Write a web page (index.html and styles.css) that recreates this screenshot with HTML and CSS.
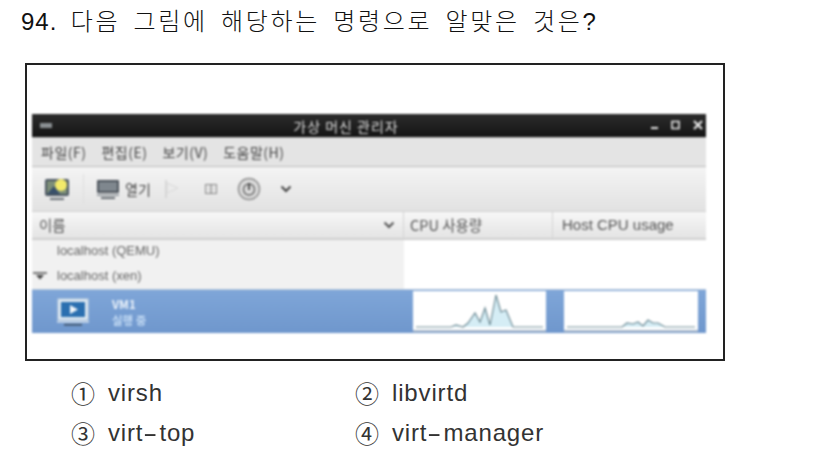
FILE: index.html
```html
<!DOCTYPE html>
<html>
<head>
    <title>94. 가상 머신 관리자</title>
    <link rel="stylesheet" href="styles.css">
</head>
<body>
    <h1 class="question"><span class="qnum">94.</span> 다음 그림에 해당하는 명령으로 알맞은 것은?</h1>

    <div class="figure">
        <div class="window">
            <div class="titlebar">
                <span class="app-mark"></span>
                <span class="title">가상 머신 관리자</span>
                <div class="win-buttons">
                    <svg width="60" height="14" viewBox="0 0 60 14">
                        <path d="M5 10h7" stroke="#e8e8e8" stroke-width="2"/>
                        <rect x="26" y="3.5" width="7" height="7" fill="none" stroke="#e8e8e8" stroke-width="1.6"/>
                        <path d="M48 3l8 8M56 3l-8 8" stroke="#e8e8e8" stroke-width="2.2"/>
                    </svg>
                </div>
            </div>

            <div class="menubar">
                <span>파일(F)</span>
                <span>편집(E)</span>
                <span>보기(V)</span>
                <span>도움말(H)</span>
            </div>

            <div class="toolbar">
                <svg class="tool-new" width="26" height="26" viewBox="0 0 26 26">
                    <rect x="1" y="3" width="24" height="17" rx="2" fill="#4a5560"/>
                    <rect x="3" y="5" width="20" height="13" fill="#7d8f78"/>
                    <circle cx="17" cy="9" r="6" fill="#f3ea6a"/>
                    <path d="M3 18l7-8 6 8z" fill="#39506a"/>
                    <path d="M6 22h14v2H6z" fill="#6c7278"/>
                </svg>
                <span class="tool-sep"></span>
                <svg class="tool-open" width="24" height="22" viewBox="0 0 24 22">
                    <rect x="1" y="2" width="22" height="13" rx="1" fill="#4d545c"/>
                    <rect x="3" y="4" width="18" height="9" fill="#7f878e"/>
                    <path d="M1 16h22v2H1z" fill="#9aa0a5"/>
                    <path d="M5 19h14v2H5z" fill="#666c72"/>
                </svg>
                <span class="tool-label">열기</span>
                <svg class="tool-play" width="16" height="20" viewBox="0 0 16 20">
                    <path d="M2 1v18" stroke="#cfcfcf" stroke-width="1.5"/>
                    <path d="M3 4l11 5-11 5z" fill="#ebebeb" stroke="#d8d8d8"/>
                </svg>
                <svg class="tool-pause" width="12" height="10" viewBox="0 0 12 10">
                    <rect x="0.5" y="0.5" width="11" height="9" fill="#e4e4e4" stroke="#8b8b8b"/>
                    <path d="M6 0v10" stroke="#777"/>
                </svg>
                <svg class="tool-power" width="24" height="24" viewBox="0 0 24 24">
                    <circle cx="12" cy="12" r="10.5" fill="#dcdcdc" stroke="#8f8f8f" stroke-width="1.5"/>
                    <circle cx="12" cy="12.5" r="5.5" fill="none" stroke="#666" stroke-width="1.4"/>
                    <path d="M12 6v7" stroke="#444" stroke-width="1.8"/>
                </svg>
                <svg class="tool-more" width="12" height="8" viewBox="0 0 12 8">
                    <path d="M1.5 1.5L6 6l4.5-4.5" fill="none" stroke="#444" stroke-width="2"/>
                </svg>
            </div>

            <div class="table-head">
                <div class="col-name">
                    <span>이름</span>
                    <svg width="12" height="8" viewBox="0 0 12 8">
                        <path d="M1.5 1.5L6 6l4.5-4.5" fill="none" stroke="#555" stroke-width="2"/>
                    </svg>
                </div>
                <div class="col-cpu">CPU 사용량</div>
                <div class="col-host">Host CPU usage</div>
            </div>

            <div class="conn-row">
                <div class="conn-name">localhost (QEMU)</div>
            </div>
            <div class="conn-row conn-last">
                <div class="conn-name">
                    <svg class="arrow" width="14" height="8" viewBox="0 0 14 8">
                        <path d="M0 1h14" stroke="#444" stroke-width="1.4"/>
                        <path d="M3 3h8L7 7.5z" fill="#444"/>
                    </svg>
                    localhost (xen)
                </div>
            </div>

            <div class="vm-row">
                <div class="vm-info">
                    <svg width="34" height="30" viewBox="0 0 34 30">
                        <rect x="2" y="2" width="30" height="21" fill="#dfe9f2" stroke="#c4d3e2"/>
                        <rect x="5" y="5" width="24" height="15" fill="#2b6fb0"/>
                        <path d="M14 8l8 4.5-8 4.5z" fill="#f2f6fa"/>
                        <path d="M1 24h32v1.5H1z" fill="#dbe5ee"/>
                        <path d="M8 27h18v1.5H8z" fill="#3d4d5e"/>
                    </svg>
                    <div class="vm-text">
                        <div class="vm-name">VM1</div>
                        <div class="vm-state">실행 중</div>
                    </div>
                </div>
                <div class="graph graph-cpu">
                    <svg width="133" height="41" viewBox="0 0 133 41">
                        <path d="M38 36L43 34 50 36 55 32 62 22 67 31 72 17 77 34 83 4 88 21 93 19 100 36z" fill="#d5edf5"/>
                        <path d="M3 36H38L43 34 50 36 55 32 62 22 67 31 72 17 77 34 83 4 88 21 93 19 100 36H130" fill="none" stroke="#6f8c96" stroke-width="1.2"/>
                    </svg>
                </div>
                <div class="graph graph-host">
                    <svg width="134" height="41" viewBox="0 0 134 41">
                        <path d="M58 36L63 32 69 33 74 31 79 35 84 29 89 32 94 32 101 36z" fill="#d5edf5"/>
                        <path d="M3 36H58L63 32 69 33 74 31 79 35 84 29 89 32 94 32 101 36H131" fill="none" stroke="#6f8c96" stroke-width="1.2"/>
                    </svg>
                </div>
            </div>
        </div>
    </div>

    <div class="options">
        <div class="option"><span class="num">①</span>virsh</div>
        <div class="option"><span class="num">②</span>libvirtd</div>
        <div class="option"><span class="num">③</span>virt<span class="dash">-</span>top</div>
        <div class="option"><span class="num">④</span>virt<span class="dash">-</span>manager</div>
    </div>
</body>
</html>
```

FILE: styles.css
```css
body {
    margin: 0;
    background-color: white;
    color: #222;
    font-family: "Liberation Sans", "Noto Sans CJK KR", sans-serif;
    overflow: hidden;
}
.question {
    margin: 0;
    padding: 6px 0 0 21px;
    height: 63px;
    box-sizing: border-box;
    color: #111;
    font-size: 24px;
    line-height: 32px;
    font-weight: 300;
    letter-spacing: 2.65px;
    word-spacing: 4px;
}
.qnum {
    letter-spacing: 1px;
}
.figure {
    box-sizing: border-box;
    width: 700px;
    height: 298px;
    margin-left: 25px;
    padding: 49px 0 0 5px;
    border: 2px solid #222;
}
.window {
    width: 674px;
    filter: blur(0.8px);
    font-family: "Noto Sans CJK KR", sans-serif;
    color: #555;
    font-size: 12px;
}
.titlebar {
    position: relative;
    display: flex;
    align-items: center;
    justify-content: center;
    height: 23px;
    box-sizing: border-box;
    padding-right: 46px;
    background: linear-gradient(#2c2c2c, #151515);
    color: #ddd;
}
.app-mark {
    position: absolute;
    left: 8px;
    top: 9px;
    width: 12px;
    height: 5px;
    background-color: #8a8f92;
}
.title {
    font-size: 14px;
    letter-spacing: 1px;
}
.win-buttons {
    position: absolute;
    right: 0;
    top: 4px;
    height: 14px;
}
.menubar {
    display: flex;
    gap: 15px;
    align-items: center;
    height: 30px;
    box-sizing: border-box;
    padding-left: 9px;
    background-color: #e4e4e4;
    border-top: 1px solid #bbb;
    border-bottom: 1px solid #bdbdbd;
    color: #444;
    font-size: 14px;
    letter-spacing: 0.5px;
}
.toolbar {
    display: flex;
    align-items: center;
    height: 45px;
    box-sizing: border-box;
    padding-left: 12px;
    background: linear-gradient(#f4f4f4, #e2e2e2);
    border-bottom: 1px solid #cfcfcf;
}
.tool-sep {
    width: 1px;
    height: 30px;
    margin: 0 12px 0 13px;
    background-color: #dedede;
}
.tool-label {
    margin-left: 5px;
    color: #444;
    font-size: 14px;
}
.tool-play {
    margin-left: 13px;
}
.tool-pause {
    margin-left: 25px;
}
.tool-power {
    margin-left: 20px;
}
.tool-more {
    margin-left: 19px;
}
.table-head {
    display: flex;
    height: 28px;
    box-sizing: border-box;
    background: linear-gradient(#f7f7f7, #e4e4e4);
    border-bottom: 2px solid #cfcfcf;
    color: #555;
    font-size: 14.5px;
    line-height: 26px;
}
.col-name {
    display: flex;
    align-items: center;
    justify-content: space-between;
    box-sizing: border-box;
    width: 372px;
    padding: 0 8px 0 7px;
    border-right: 1px solid #d4d4d4;
}
.col-cpu {
    box-sizing: border-box;
    width: 149px;
    padding-left: 6px;
    border-right: 1px solid #d4d4d4;
}
.col-host {
    padding-left: 9px;
    font-family: "Liberation Sans", sans-serif;
    font-size: 15px;
}
.conn-row {
    height: 25px;
    background-color: white;
}
.conn-last {
    height: 24px;
}
.conn-name {
    position: relative;
    box-sizing: border-box;
    width: 372px;
    height: 100%;
    padding-left: 25px;
    background-color: #f1f1f1;
    font-family: "Liberation Sans", sans-serif;
    font-size: 13px;
    line-height: 22px;
    color: #666;
}
.arrow {
    position: absolute;
    left: 1px;
    top: 7px;
}
.vm-row {
    display: flex;
    align-items: center;
    height: 44px;
    box-sizing: border-box;
    background: linear-gradient(#7fa6d8, #6f97cd);
    border-top: 1px solid #b4c6da;
}
.vm-info {
    display: flex;
    align-items: center;
    gap: 22px;
    width: 381px;
    padding-left: 24px;
    box-sizing: border-box;
    color: #eef4fb;
}
.vm-text {
    font-size: 11.5px;
    line-height: 16px;
    font-weight: 700;
}
.vm-state {
    color: #c5dcf5;
}
.graph {
    height: 41px;
    box-sizing: border-box;
    background-color: white;
    border-bottom: 2px solid #a9b8c9;
}
.graph svg {
    display: block;
}
.graph-cpu {
    width: 133px;
}
.graph-host {
    width: 134px;
    margin-left: 18px;
}
.options {
    display: grid;
    grid-template-columns: 284px auto;
    grid-auto-rows: 40px;
    padding: 12px 0 0 71px;
    font-size: 24px;
    line-height: 40px;
    letter-spacing: 0.85px;
    color: #333;
}
.option {
    display: flex;
    font-weight: 300;
}
.dash {
    width: 16px;
    text-align: center;
    transform: scaleX(1.8);
}
.num {
    width: 37px;
    font-family: "Noto Sans CJK KR", sans-serif;
    font-size: 24px;
    font-weight: 400;
    letter-spacing: 0;
}
```
